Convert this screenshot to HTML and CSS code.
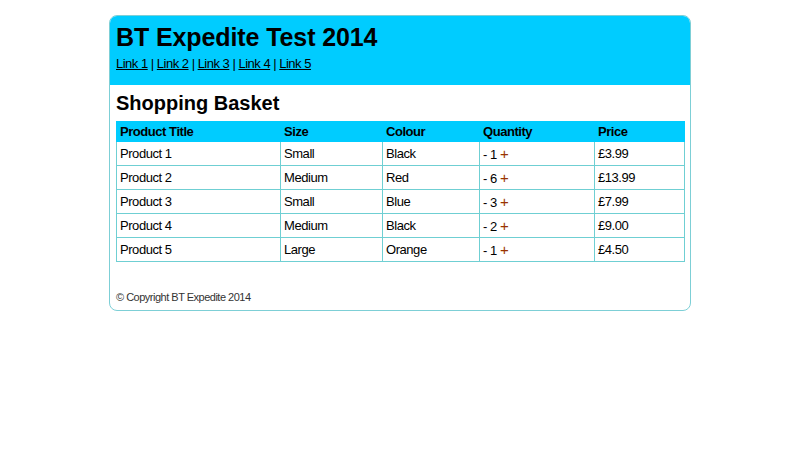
FILE: index.html
```html
<!DOCTYPE html>
<html>
<head>
<meta charset="utf-8">
<link rel="stylesheet" href="styles.css">
</head>
<body>
<div class="page">
  <div class="header">
    <h1 class="title">BT Expedite Test 2014</h1>
    <div class="nav"><a href="#">Link 1</a> | <a href="#">Link 2</a> | <a href="#">Link 3</a> | <a href="#">Link 4</a> | <a href="#">Link 5</a></div>
  </div>
  <div class="content">
    <h2 class="heading">Shopping Basket</h2>
    <table class="basket">
      <colgroup>
        <col class="c1"><col class="c2"><col class="c3"><col class="c4"><col class="c5">
      </colgroup>
      <thead>
        <tr><th>Product Title</th><th>Size</th><th>Colour</th><th>Quantity</th><th>Price</th></tr>
      </thead>
      <tbody>
        <tr><td>Product 1</td><td>Small</td><td>Black</td><td><span class="minus">-</span> 1 <span class="plus">+</span></td><td>£3.99</td></tr>
        <tr><td>Product 2</td><td>Medium</td><td>Red</td><td><span class="minus">-</span> 6 <span class="plus">+</span></td><td>£13.99</td></tr>
        <tr><td>Product 3</td><td>Small</td><td>Blue</td><td><span class="minus">-</span> 3 <span class="plus">+</span></td><td>£7.99</td></tr>
        <tr><td>Product 4</td><td>Medium</td><td>Black</td><td><span class="minus">-</span> 2 <span class="plus">+</span></td><td>£9.00</td></tr>
        <tr><td>Product 5</td><td>Large</td><td>Orange</td><td><span class="minus">-</span> 1 <span class="plus">+</span></td><td>£4.50</td></tr>
      </tbody>
    </table>
    <div class="footer">© Copyright BT Expedite 2014</div>
  </div>
</div>
</body>
</html>
```
FILE: styles.css
```css
body {
  margin: 0;
  font-family: "Liberation Sans", Arial, sans-serif;
  color: #000;
  background: #fff;
}
.page {
  width: 580px;
  margin: 15px auto 0;
  border: 1px solid #7dcfd6;
  border-radius: 8px;
  overflow: hidden;
}
.header {
  background: #00ccff;
  padding: 6px 6px 13px;
}
.title {
  margin: 0;
  font-size: 25px;
  line-height: 30px;
  font-weight: bold;
  letter-spacing: -0.1px;
}
.nav {
  margin-top: 4px;
  font-size: 13px;
  line-height: 16px;
  letter-spacing: -0.5px;
}
.nav a {
  color: #000;
  text-decoration: underline;
}
.content {
  padding: 6px 6px 6px;
}
.heading {
  margin: 0 0 6px;
  font-size: 20px;
  line-height: 24px;
  font-weight: bold;
}
.basket {
  width: 568px;
  border-collapse: collapse;
  font-size: 13px;
  letter-spacing: -0.45px;
  table-layout: fixed;
}
.c1 { width: 164px; }
.c2 { width: 102px; }
.c3 { width: 97px; }
.c4 { width: 115px; }
.c5 { width: 90px; }
.basket th, .basket td {
  border: 1px solid #6fcfd3;
  padding: 0 3px;
  text-align: left;
}
.basket th {
  background: #00ccff;
  height: 19px;
  font-weight: bold;
  border-color: #00ccff;
}
.basket td {
  height: 23px;
}
.minus {
  color: #000;
}
.plus {
  color: #993300;
  font-size: 15px;
}
.footer {
  margin-top: 28px;
  font-size: 11px;
  line-height: 14px;
  letter-spacing: -0.5px;
  color: #333;
}
```
